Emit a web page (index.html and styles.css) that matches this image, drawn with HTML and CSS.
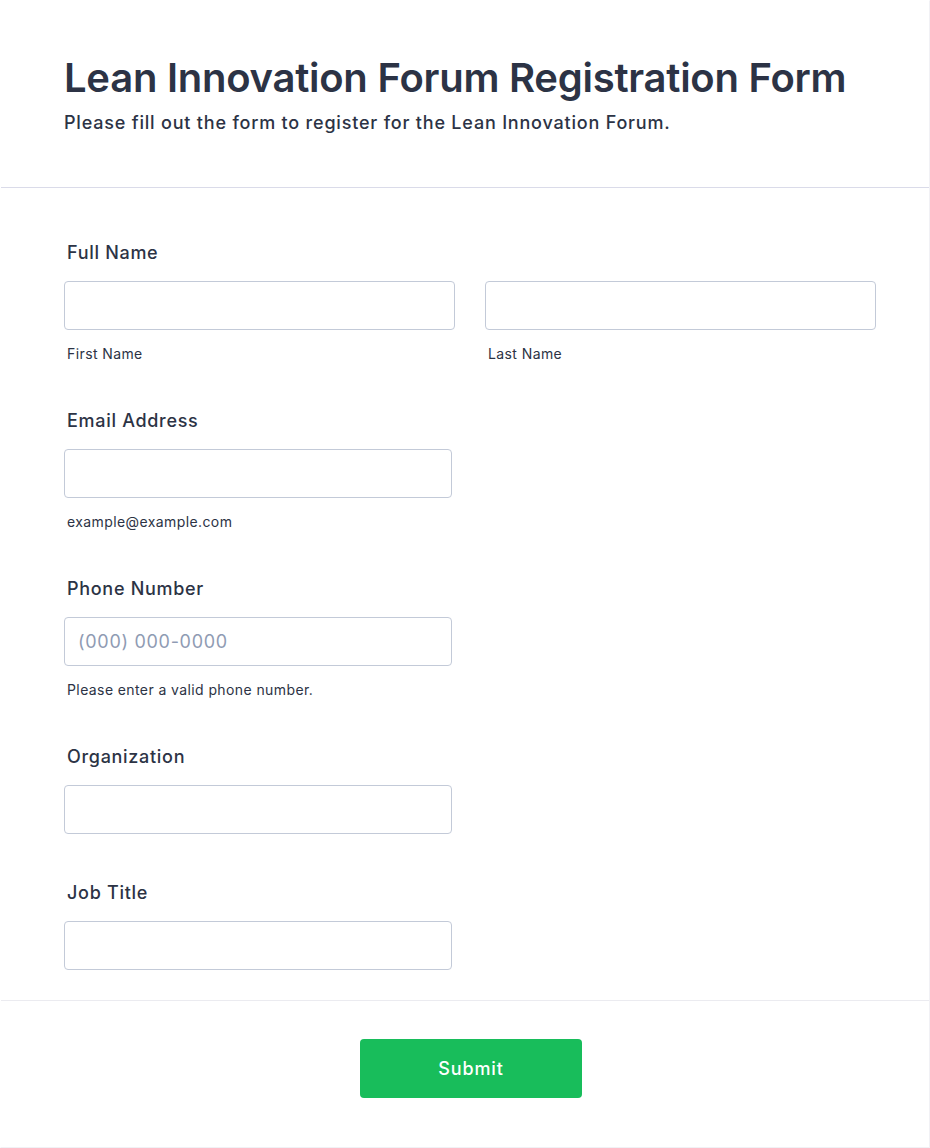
FILE: index.html
```html
<!DOCTYPE html>
<html lang="en">
<head>
<meta charset="utf-8">
<title>Lean Innovation Forum Registration Form</title>
<link rel="stylesheet" href="styles.css">
</head>
<body>
<form class="card">
  <header class="form-header">
    <h1 class="form-title">Lean Innovation Forum Registration Form</h1>
    <p class="form-subtitle">Please fill out the form to register for the Lean Innovation Forum.</p>
  </header>

  <div class="form-body">
    <div class="field">
      <label class="field-label">Full Name</label>
      <div class="name-row">
        <div class="name-col">
          <input class="text-input" type="text">
          <span class="sublabel">First Name</span>
        </div>
        <div class="name-col">
          <input class="text-input" type="text">
          <span class="sublabel">Last Name</span>
        </div>
      </div>
    </div>

    <div class="field">
      <label class="field-label">Email Address</label>
      <input class="text-input single" type="email">
      <span class="sublabel">example@example.com</span>
    </div>

    <div class="field">
      <label class="field-label">Phone Number</label>
      <input class="text-input single" type="tel" placeholder="(000) 000-0000">
      <span class="sublabel">Please enter a valid phone number.</span>
    </div>

    <div class="field">
      <label class="field-label">Organization</label>
      <input class="text-input single" type="text">
    </div>

    <div class="field field-last">
      <label class="field-label">Job Title</label>
      <input class="text-input single" type="text">
    </div>
  </div>

  <footer class="form-footer">
    <button class="submit-btn" type="button">Submit</button>
  </footer>
</form>
</body>
</html>
```

FILE: styles.css
```css
* {
  box-sizing: border-box;
}

html, body {
  margin: 0;
  padding: 0;
  background: #ffffff;
}

body {
  font-family: Inter, "Noto Sans", "Liberation Sans", sans-serif;
  color: #2c3345;
}

.card {
  width: 930px;
  height: 1148px;
  border: 1px solid #f1f1f5;
  border-top-color: #ffffff;
  border-left-color: #ffffff;
  background: #ffffff;
  display: flex;
  flex-direction: column;
}

.form-header {
  padding: 53px 64px 50px 63px;
  border-bottom: 1px solid #dadbe9;
}

.form-title {
  margin: 0;
  font-size: 40px;
  line-height: 48px;
  font-weight: 600;
  color: #2c3345;
  letter-spacing: -0.25px;
}

.form-subtitle {
  margin: 7px 0 0 0;
  font-size: 18px;
  line-height: 28px;
  font-weight: 500;
  letter-spacing: 0.8px;
  color: #2c3345;
}

.form-body {
  padding: 51px 54px 30px 63px;
  display: flex;
  flex-direction: column;
  gap: 44px;
  border-bottom: 1px solid #ebebf0;
}

.field {
  display: flex;
  flex-direction: column;
  align-items: flex-start;
}

.field-last {
  margin-top: 1px;
}

.field-label {
  display: block;
  padding-left: 3px;
  font-size: 18px;
  line-height: 28px;
  font-weight: 500;
  letter-spacing: 0.7px;
  margin-bottom: 14px;
}

.name-row {
  width: 100%;
  display: grid;
  grid-template-columns: 391px 391px;
  column-gap: 30px;
}

.name-col {
  display: flex;
  flex-direction: column;
}

.text-input {
  display: block;
  width: 100%;
  height: 49px;
  border: 1px solid #c3cad8;
  border-radius: 4px;
  background: #ffffff;
  padding: 0 13px;
  font-family: inherit;
  font-size: 18px;
  letter-spacing: 0.7px;
  color: #2c3345;
  outline: none;
}

.text-input.single {
  width: 388px;
}

.text-input::placeholder {
  color: #8f9bb3;
}

.sublabel {
  display: block;
  margin-top: 14px;
  padding-left: 3px;
  font-size: 14px;
  line-height: 19px;
  font-weight: 400;
  letter-spacing: 0.4px;
  color: #2c3345;
}

.form-footer {
  flex: 1;
  display: flex;
  justify-content: center;
  align-items: flex-start;
  padding-top: 38px;
}

.submit-btn {
  width: 222px;
  height: 59px;
  margin-left: 12px;
  border: none;
  border-radius: 4px;
  background: #18bd5b;
  color: #ffffff;
  font-family: inherit;
  font-size: 18px;
  font-weight: 500;
  letter-spacing: 0.9px;
  cursor: pointer;
}
```
